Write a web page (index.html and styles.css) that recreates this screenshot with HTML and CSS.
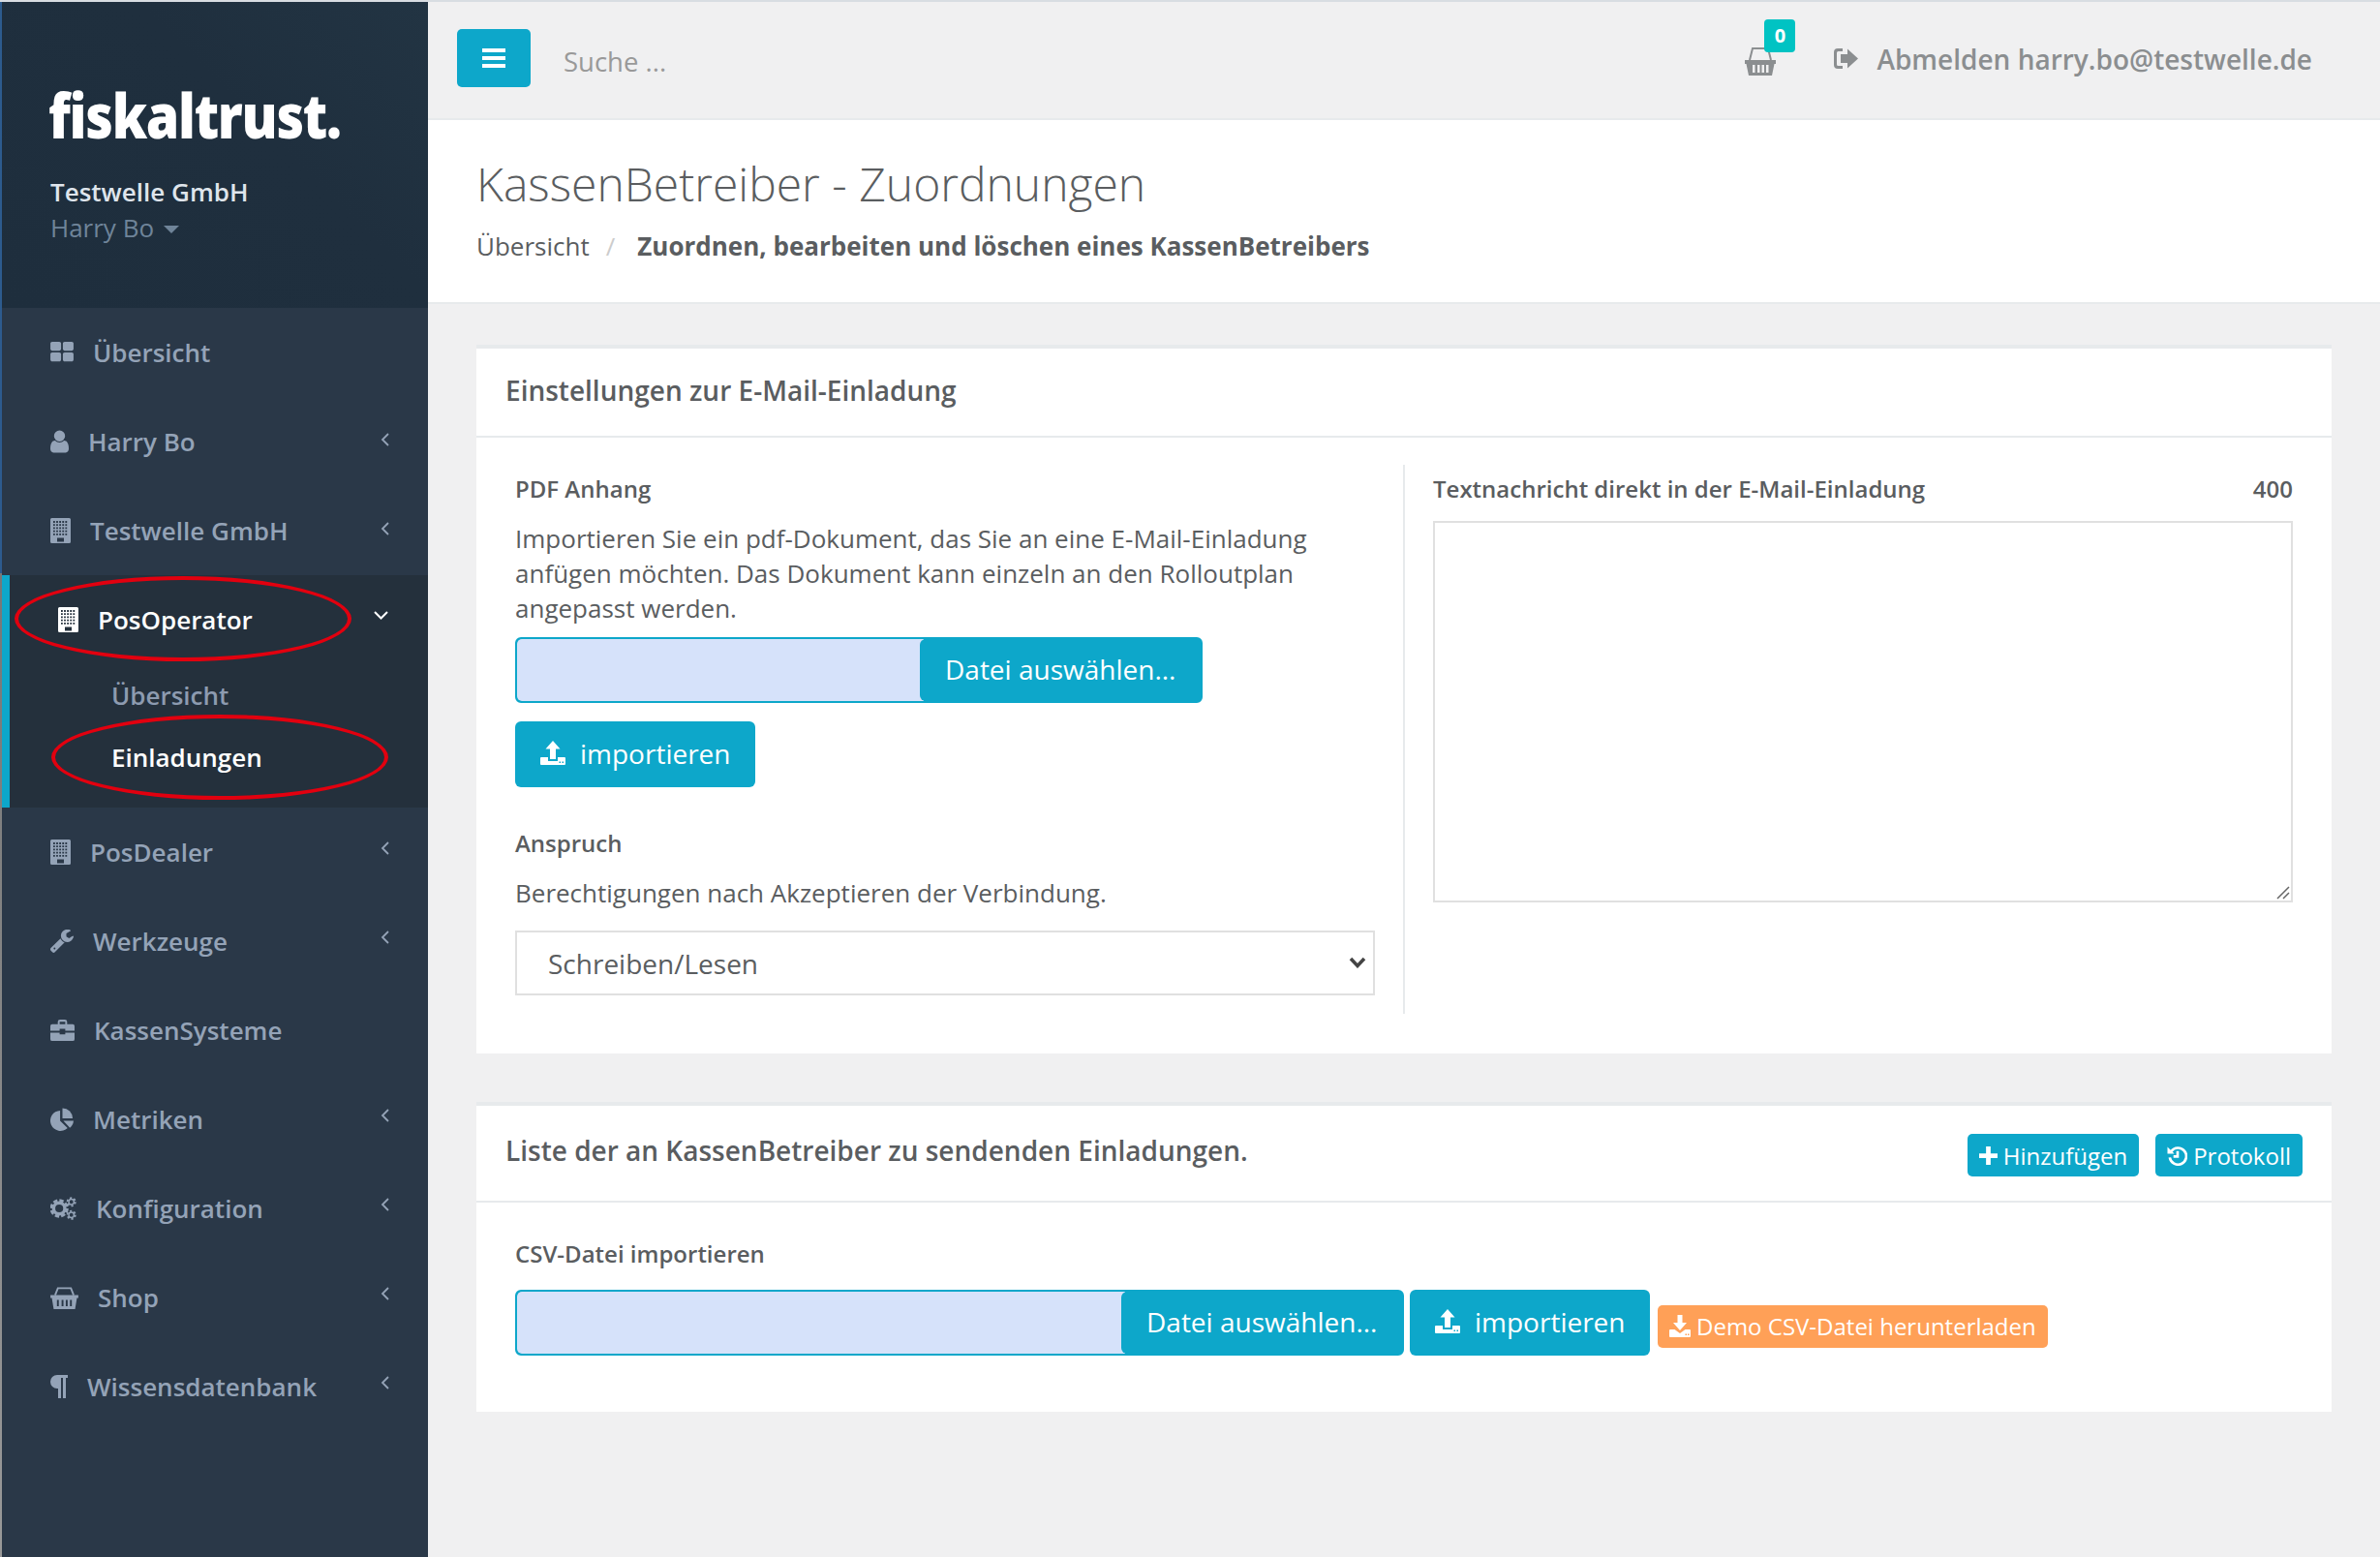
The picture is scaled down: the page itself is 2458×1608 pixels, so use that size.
FILE: index.html
```html
<!DOCTYPE html>
<html lang="de">
<head>
  <meta charset="utf-8">
  <title>KassenBetreiber - Zuordnungen</title>
  <link rel="stylesheet" href="styles.css">
</head>
<body>

<!-- icons used more than once -->
<svg class="defs" width="0" height="0">
  <symbol id="i-building" viewBox="0 0 21 26">
    <path d="M1.500 0H19.500A1.500 1.500 0 0 1 21 1.500V24.500A1.500 1.500 0 0 1 19.500 26H1.500A1.500 1.500 0 0 1 0 24.500V1.500A1.500 1.500 0 0 1 1.500 0Z"/>
    <path class="cut" d="M3 4H18.500M3 7.200H18.500M3 10.400H18.500M3 13.600H18.500M3 16.800H18.500" stroke-width="1.800" stroke-dasharray="1.800 1.300"/>
    <rect class="hole" x="7" y="20.500" width="7" height="4"/>
  </symbol>
  <symbol id="i-upload" viewBox="0 0 26 25">
    <path d="M13 0L20.500 8.500H16V19H10V8.500H5.500Z"/>
    <path fill-rule="evenodd" d="M1 17H8V21H18V17H25A1 1 0 0 1 26 18V24A1 1 0 0 1 25 25H1A1 1 0 0 1 0 24V18A1 1 0 0 1 1 17ZM19.500 21.500V23H21V21.500ZM22.500 21.500V23H24V21.500Z"/>
  </symbol>
</svg>

<div class="app">
  <div class="edge"></div>

  <aside class="sidebar">
    <div class="side-head">
      <div class="logo">fiskaltrust.</div>
      <div class="side-company">Testwelle GmbH</div>
      <div class="side-user">Harry Bo <span class="caret"></span></div>
    </div>

    <nav class="nav">
      <a class="nav-item">
        <svg class="icon w24" viewBox="60 128 1672 1536"><path d="M832 1024v384q0 52-38 90t-90 38h-512q-52 0-90-38t-38-90v-384q0-52 38-90t90-38h512q52 0 90 38t38 90zm0-768v384q0 52-38 90t-90 38h-512q-52 0-90-38t-38-90v-384q0-52 38-90t90-38h512q52 0 90 38t38 90zm896 768v384q0 52-38 90t-90 38h-512q-52 0-90-38t-38-90v-384q0-52 38-90t90-38h512q52 0 90 38t38 90zm0-768v384q0 52-38 90t-90 38h-512q-52 0-90-38t-38-90v-384q0-52 38-90t90-38h512q52 0 90 38t38 90z"/></svg>
        <span>Übersicht</span>
      </a>
      <a class="nav-item">
        <svg class="icon w19" viewBox="256 128 1280 1536"><path d="M1536 1399q0 109-62.500 187t-150.500 78h-854q-88 0-150.500-78t-62.500-187q0-85 8.500-160.500t31.500-152 58.500-131 94-89 134.500-34.500q131 128 313 128t313-128q76 0 134.500 34.500t94 89 58.500 131 31.500 152 8.500 160.500zm-256-887q0 159-112.500 271.500t-271.500 112.500-271.500-112.500-112.500-271.500 112.500-271.500 271.500-112.500 271.500 112.500 112.500 271.500z"/></svg>
        <span>Harry Bo</span>
        <svg class="chev" viewBox="0 0 9 14"><path d="M8 1L2 7L8 13"/></svg>
      </a>
      <a class="nav-item">
        <svg class="icon w21"><use href="#i-building"/></svg>
        <span>Testwelle GmbH</span>
        <svg class="chev" viewBox="0 0 9 14"><path d="M8 1L2 7L8 13"/></svg>
      </a>

      <div class="nav-open">
        <span class="mark mark-a"></span>
        <span class="mark mark-b"></span>
        <a class="nav-item nav-current">
          <svg class="icon w21"><use href="#i-building"/></svg>
          <span>PosOperator</span>
          <svg class="chev-down" viewBox="0 0 15 9"><path d="M1 1L7.500 7.500L14 1"/></svg>
        </a>
        <a class="nav-sub">Übersicht</a>
        <a class="nav-sub nav-sub-current">Einladungen</a>
      </div>

      <a class="nav-item">
        <svg class="icon w21"><use href="#i-building"/></svg>
        <span>PosDealer</span>
        <svg class="chev" viewBox="0 0 9 14"><path d="M8 1L2 7L8 13"/></svg>
      </a>
      <a class="nav-item">
        <svg class="icon w24" viewBox="64 100 1640 1590"><path d="M424 1408q0-26-19-45t-45-19-45 19-19 45 19 45 45 19 45-19 19-45zm644-420l-682 682q-37 37-90 37-52 0-91-37l-106-108q-38-36-38-90 0-53 38-91l681-681q39 98 114.500 173.500t173.500 114.500zm634-435q0 39-23 106-47 134-164.500 217.500t-258.500 83.500q-185 0-316.500-131.500t-131.500-316.500 131.500-316.500 316.500-131.500q58 0 121.500 16.500t107.500 46.500q16 11 16 28t-16 28l-293 169v224l193 107q5-3 79-48.500t135.500-81 70.500-35.500q15 0 23.500 10t8.500 25z"/></svg>
        <span>Werkzeuge</span>
        <svg class="chev" viewBox="0 0 9 14"><path d="M8 1L2 7L8 13"/></svg>
      </a>
      <a class="nav-item">
        <svg class="icon w26" viewBox="0 0 26 23"><path d="M8 5V2.500A2.500 2.500 0 0 1 10.500 0H15.500A2.500 2.500 0 0 1 18 2.500V5H24A2 2 0 0 1 26 7V12H16V10H10V12H0V7A2 2 0 0 1 2 5ZM10 5H16V2.500H10ZM0 14H10V16H16V14H26V21A2 2 0 0 1 24 23H2A2 2 0 0 1 0 21Z"/></svg>
        <span>KassenSysteme</span>
      </a>
      <a class="nav-item">
        <svg class="icon w25" viewBox="0 0 25 24"><path d="M10.500 2.500V13.500L18.500 21.500A11 11 0 1 1 10.500 2.500Z"/><path d="M13 0A11 11 0 0 1 24 11H13Z"/><path d="M14 13.500H25A11 11 0 0 1 21 21Z"/></svg>
        <span>Metriken</span>
        <svg class="chev" viewBox="0 0 9 14"><path d="M8 1L2 7L8 13"/></svg>
      </a>
      <a class="nav-item">
        <svg class="icon w28" viewBox="0 0 28 24">
          <circle class="gear" cx="9.500" cy="12" r="6"/>
          <circle class="teeth" cx="9.500" cy="12" r="8.500"/>
          <circle class="gear gear-small" cx="22.500" cy="5" r="2.800"/>
          <circle class="teeth teeth-small" cx="22.500" cy="5" r="4.300"/>
          <circle class="gear gear-small" cx="22.500" cy="19" r="2.800"/>
          <circle class="teeth teeth-small" cx="22.500" cy="19" r="4.300"/>
        </svg>
        <span>Konfiguration</span>
        <svg class="chev" viewBox="0 0 9 14"><path d="M8 1L2 7L8 13"/></svg>
      </a>
      <a class="nav-item">
        <svg class="icon w30" viewBox="0 0 30 25"><path d="M0 10H30V13H28.500L26.500 25H3.500L1.500 13H0ZM7 15V22H9V15ZM12 15V22H14V15ZM16.500 15V22H18.500V15ZM21 15V22H23V15Z" fill-rule="evenodd"/><path class="handle" d="M5 10L8 2.500H22L25 10"/></svg>
        <span>Shop</span>
        <svg class="chev" viewBox="0 0 9 14"><path d="M8 1L2 7L8 13"/></svg>
      </a>
      <a class="nav-item">
        <svg class="icon w18" viewBox="0 0 18 24"><path d="M7 0H18V3H16V24H13V3H11V24H8V14H7A7 7 0 0 1 7 0Z"/></svg>
        <span>Wissensdatenbank</span>
        <svg class="chev" viewBox="0 0 9 14"><path d="M8 1L2 7L8 13"/></svg>
      </a>
    </nav>
  </aside>

  <div class="main">
    <header class="topbar">
      <button class="menu-btn">
        <svg viewBox="0 0 24 20" width="24" height="20"><path d="M0 0H24V4H0ZM0 8H24V12H0ZM0 16H24V20H0Z"/></svg>
      </button>
      <span class="search">Suche ...</span>
      <div class="top-right">
        <div class="cart">
          <svg class="cart-icon" viewBox="0 0 32 30"><path d="M0 14H32V18H30.500L28 30H4L1.500 18H0ZM8 19V27H10.500V19ZM13 19V27H15.500V19ZM17.500 19V27H20V19ZM22 19V27H24.500V19Z" fill-rule="evenodd"/><path class="cart-handle" d="M5 14L8 2H24L27 14"/></svg>
          <span class="cart-badge">0</span>
        </div>
        <svg class="logout-icon" viewBox="0 0 25 21"><path d="M9 0H4A4 4 0 0 0 0 4V17A4 4 0 0 0 4 21H9V18H4.500A1.500 1.500 0 0 1 3 16.500V4.500A1.500 1.500 0 0 1 4.500 3H9Z"/><path d="M7 6H14V0.500L25 10.500L14 20.500V15H7Z"/></svg>
        <span class="logout">Abmelden harry.bo@testwelle.de</span>
      </div>
    </header>

    <section class="page-head">
      <h1>KassenBetreiber - Zuordnungen</h1>
      <div class="crumbs">
        <span>Übersicht</span>
        <span class="crumb-sep">/</span>
        <strong>Zuordnen, bearbeiten und löschen eines KassenBetreibers</strong>
      </div>
    </section>

    <div class="content">
      <section class="card">
        <div class="card-head"><h2>Einstellungen zur E-Mail-Einladung</h2></div>
        <div class="card-body settings">
          <div class="col col-left">
            <label class="label">PDF Anhang</label>
            <p class="text">Importieren Sie ein pdf-Dokument, das Sie an eine E-Mail-Einladung anfügen möchten. Das Dokument kann einzeln an den Rolloutplan angepasst werden.</p>
            <div class="file file-short">
              <span class="file-name"></span>
              <span class="file-btn">Datei auswählen...</span>
            </div>
            <button class="btn-import import-gap">
              <svg class="up-icon"><use href="#i-upload"/></svg>
              importieren
            </button>
            <label class="label claim">Anspruch</label>
            <p class="text claim-text">Berechtigungen nach Akzeptieren der Verbindung.</p>
            <div class="select-wrap">
              <select class="select"><option>Schreiben/Lesen</option></select>
              <svg class="select-arrow" viewBox="0 0 18 12"><path d="M2 2L9 9.500L16 2"/></svg>
            </div>
          </div>
          <div class="col col-right">
            <div class="label-row">
              <label class="label">Textnachricht direkt in der E-Mail-Einladung</label>
              <span class="label">400</span>
            </div>
            <div class="message-wrap">
              <textarea class="message"></textarea>
              <svg class="grip" viewBox="0 0 14 14"><path d="M1 13L13 1M7 13L13 7"/></svg>
            </div>
          </div>
        </div>
      </section>

      <section class="card">
        <div class="card-head card-head-tall">
          <h2>Liste der an KassenBetreiber zu sendenden Einladungen.</h2>
          <div class="head-btns">
            <button class="btn-small">
              <svg viewBox="0 0 20 20" width="19" height="19"><path d="M7.500 0H12.500V7.500H20V12.500H12.500V20H7.500V12.500H0V7.500H7.500Z"/></svg>
              Hinzufügen
            </button>
            <button class="btn-small">
              <svg class="history" viewBox="0 0 22 22" width="21" height="21"><path d="M4.500 6.500A9 9 0 1 1 3 13"/><path d="M11.500 6V12H7"/><path class="arrow" d="M0.500 1.500L8 9H0.500Z"/></svg>
              Protokoll
            </button>
          </div>
        </div>
        <div class="card-body csv">
          <label class="label">CSV-Datei importieren</label>
          <div class="csv-row">
            <div class="file file-long">
              <span class="file-name"></span>
              <span class="file-btn">Datei auswählen...</span>
            </div>
            <button class="btn-import">
              <svg class="up-icon"><use href="#i-upload"/></svg>
              importieren
            </button>
            <button class="btn-demo">
              <svg viewBox="0 0 22 23" width="22" height="23"><path d="M8.500 0H13.500V8H18L11 16L4 8H8.500Z"/><path fill-rule="evenodd" d="M1 15H5.500L11 19L16.500 15H21A1 1 0 0 1 22 16V22A1 1 0 0 1 21 23H1A1 1 0 0 1 0 22V16A1 1 0 0 1 1 15ZM16.500 19.500V21H18V19.500ZM19 19.500V21H20.500V19.500Z"/></svg>
              Demo CSV-Datei herunterladen
            </button>
          </div>
        </div>
      </section>
    </div>
  </div>
</div>

</body>
</html>
```

FILE: styles.css
```css
* {
  box-sizing: border-box;
}

html, body {
  margin: 0;
  padding: 0;
}

body {
  font-family: "Open Sans", "Noto Sans", sans-serif;
  font-size: 26px;
  color: #5a5d60;
  background: #f0f0f1;
}

.defs {
  position: absolute;
}

.app {
  display: flex;
  min-height: 1608px;
  border-top: 2px solid #d8dde2;
}

.edge {
  width: 2px;
  flex: none;
  background: linear-gradient(#2d5b8e 0, #2d5b8e 590px, #777 590px, #999 100%);
}

/* sidebar */
.sidebar {
  width: 440px;
  flex: none;
  background: #2a3848;
  color: #94a3b7;
}

.side-head {
  height: 316px;
  padding: 77px 0 0 50px;
  background: linear-gradient(45deg, #1e2e3d 0, #1f2f3e 60%, #223443 100%);
}

.logo {
  margin-left: -2px;
  font-weight: 800;
  font-size: 63px;
  line-height: 80px;
  letter-spacing: -1.500px;
  color: #fff;
  transform: scaleX(.88);
  transform-origin: left;
}

.side-company {
  margin-top: 21px;
  line-height: 36px;
  font-weight: 600;
  color: #dfe5ec;
}

.side-user {
  display: flex;
  align-items: center;
  gap: 10px;
  line-height: 38px;
  color: #6f8499;
}

.caret {
  margin-top: 4px;
  border-top: 8px solid #6f8499;
  border-left: 8px solid transparent;
  border-right: 8px solid transparent;
}

.nav {
  --bg: #2a3848;
}

.nav-item {
  display: flex;
  align-items: center;
  gap: 20px;
  height: 92px;
  padding: 0 40px 0 50px;
  font-weight: 600;
}

.icon {
  flex: none;
  height: 24px;
  fill: #94a3b7;
}

.w18 { width: 18px; }
.w19 { width: 19px; }
.w21 { width: 21px; height: 26px; }
.w24 { width: 24px; }
.w25 { width: 24px; }
.w26 { width: 25px; }
.w28 { width: 27px; }
.w30 { width: 29px; }

.cut {
  fill: none;
  stroke: var(--bg);
}

.hole {
  fill: var(--bg);
}

.gear {
  fill: none;
  stroke: #94a3b7;
  stroke-width: 3.500;
}

.teeth {
  fill: none;
  stroke: #94a3b7;
  stroke-width: 3;
  stroke-dasharray: 4.500 2.170;
}

.gear-small {
  stroke-width: 1.500;
}

.teeth-small {
  stroke-width: 1.800;
  stroke-dasharray: 2.300 2.200;
}

.handle {
  fill: none;
  stroke: #94a3b7;
  stroke-width: 2;
}

.chev {
  margin-left: auto;
  margin-top: -5px;
  width: 9px;
  height: 14px;
  flex: none;
  fill: none;
  stroke: #94a3b7;
  stroke-width: 1.800;
}

.nav-open ~ .nav-item .chev {
  margin-top: -8px;
}

.chev-down {
  margin-left: auto;
  margin-top: -9px;
  width: 15px;
  height: 9px;
  flex: none;
  fill: none;
  stroke: #fff;
  stroke-width: 2;
}

.nav-open {
  --bg: #24303c;
  position: relative;
  height: 240px;
  background: #24303c;
  border-left: 8px solid #0da7ca;
}

.nav-open .nav-item {
  padding-right: 41px;
}

.nav-current {
  color: #fff;
}

.nav-current .icon {
  fill: #fff;
}

.nav-sub {
  display: block;
  height: 64px;
  line-height: 64px;
  padding-left: 105px;
  font-weight: 600;
  color: #8d9bb0;
}

.nav-sub-current {
  color: #fff;
}

/* red rings drawn over the menu */
.mark {
  position: absolute;
  width: 348px;
  height: 88px;
  border: 4px solid #e2000f;
  border-radius: 50%;
}

.mark-a {
  left: 5px;
  top: 1px;
}

.mark-b {
  left: 43px;
  top: 144px;
}

/* top bar */
.main {
  flex: 1;
  min-width: 0;
}

.topbar {
  display: flex;
  align-items: center;
  height: 122px;
  padding: 0 70px 4px 30px;
  background: #f0f0f1;
  border-bottom: 2px solid #e7eaec;
}

.menu-btn {
  display: flex;
  align-items: center;
  justify-content: center;
  width: 76px;
  height: 60px;
  padding: 0;
  background: #0da7ca;
  border: 0;
  border-radius: 5px;
}

.menu-btn svg {
  fill: #fff;
}

.search {
  margin-left: 34px;
  margin-top: 6px;
  color: #999;
  font-size: 27.500px;
}

.top-right {
  display: flex;
  align-items: center;
  margin-left: auto;
}

.cart {
  position: relative;
  width: 32px;
  height: 30px;
  margin-top: 6px;
}

.cart-icon {
  display: block;
  width: 32px;
  height: 30px;
  fill: #8b8e90;
}

.cart-handle {
  fill: none;
  stroke: #8b8e90;
  stroke-width: 2;
}

.cart-badge {
  position: absolute;
  left: 20px;
  top: -28px;
  width: 32px;
  height: 34px;
  border-radius: 4px;
  background: #00c3c3;
  color: #fff;
  font-size: 20px;
  font-weight: 700;
  line-height: 34px;
  text-align: center;
}

.logout-icon {
  width: 25px;
  height: 21px;
  margin-left: 60px;
  fill: #8b8e90;
}

.logout {
  margin-left: 19px;
  margin-top: 2px;
  font-size: 28px;
  font-weight: 600;
  color: #8b8e90;
}

/* page heading */
.page-head {
  height: 190px;
  padding: 30px 0 0 50px;
  background: #fff;
  border-bottom: 2px solid #e7eaec;
}

.page-head h1 {
  margin: 0;
  font-size: 48px;
  font-weight: 300;
  line-height: 72px;
  color: #5a5d60;
}

.crumbs {
  display: flex;
  align-items: center;
  margin-top: 8px;
  line-height: 40px;
  font-size: 26px;
}

.crumb-sep {
  margin: 0 23px 0 17px;
  color: #ccc;
}

/* cards */
.content {
  padding: 42px 50px 0;
}

.card {
  margin-bottom: 50px;
  background: #fff;
  border-top: 4px solid #e7eaec;
}

.card-head {
  display: flex;
  align-items: center;
  justify-content: space-between;
  height: 92px;
  padding: 0 30px 5px;
  border-bottom: 2px solid #e7eaec;
}

.card-head-tall {
  height: 100px;
}

.card-head h2 {
  margin: 0;
  font-size: 28px;
  font-weight: 600;
  color: #5a5d60;
}

.card-head-tall h2 {
  margin-top: -2px;
}

.head-btns {
  display: flex;
  gap: 17px;
  margin-top: 9px;
}

.settings {
  display: grid;
  grid-template-columns: 917px 1fr;
  padding: 28px 40px 41px;
}

.col {
  padding-top: 7px;
}

.col-left {
  padding-right: 29px;
  padding-bottom: 19px;
}

.col-right {
  padding-left: 29px;
  border-left: 2px solid #e7eaec;
}

.label {
  display: block;
  line-height: 36px;
  font-size: 24px;
  font-weight: 600;
}

.text {
  margin: 15px 0 0;
  line-height: 36px;
  font-size: 26px;
}

.label-row {
  display: flex;
  justify-content: space-between;
}

.message-wrap {
  position: relative;
  margin-top: 15px;
}

.message {
  display: block;
  width: 100%;
  height: 394px;
  border: 2px solid #e0e0e0;
  background: #fff;
  resize: none;
}

.grip {
  position: absolute;
  right: 3px;
  bottom: 3px;
  width: 14px;
  height: 14px;
  fill: none;
  stroke: #666;
  stroke-width: 1.500;
}

.file {
  display: flex;
  height: 68px;
  border: 2px solid #0da7ca;
  border-radius: 6px;
  background: #0da7ca;
  overflow: hidden;
}

.file-short {
  width: 710px;
  margin-top: 12px;
}

.file-long {
  width: 918px;
}

.file-name {
  flex: 1;
  background: #d6e2fa;
  border-radius: 5px 0 0 5px;
}

.file-btn {
  width: 290px;
  flex: none;
  margin-left: -4px;
  padding-left: 26px;
  line-height: 62px;
  border-radius: 6px 0 0 6px;
  background: #0da7ca;
  color: #fff;
  font-size: 28px;
}

.btn-import {
  display: flex;
  align-items: center;
  gap: 15px;
  width: 248px;
  height: 68px;
  padding: 0 0 3px 26px;
  background: #0da7ca;
  border: 0;
  border-radius: 6px;
  color: #fff;
  font-family: inherit;
  font-size: 28px;
}

.import-gap {
  margin-top: 19px;
}

.up-icon {
  width: 26px;
  height: 25px;
  fill: #fff;
  flex: none;
}

.claim {
  margin-top: 40px;
}

.select-wrap {
  position: relative;
  margin-top: 21px;
}

.select {
  display: block;
  width: 100%;
  height: 67px;
  padding-left: 32px;
  appearance: none;
  background: #fff;
  border: 2px solid #e0e0e0;
  border-radius: 0;
  font-family: inherit;
  font-size: 28px;
  color: #5a5d60;
}

.select-arrow {
  position: absolute;
  right: 9px;
  top: 27px;
  width: 18px;
  height: 12px;
  fill: none;
  stroke: #444;
  stroke-width: 3.500;
}

.btn-small {
  display: flex;
  align-items: center;
  gap: 6px;
  height: 44px;
  padding: 0 12px;
  background: #0da7ca;
  border: 0;
  border-radius: 5px;
  color: #fff;
  font-family: inherit;
  font-size: 24px;
  fill: #fff;
}

.history {
  fill: none;
  stroke: #fff;
  stroke-width: 2.800;
}

.history .arrow {
  fill: #fff;
  stroke: none;
}

.csv {
  padding: 35px 40px 58px;
}

.csv-row {
  display: flex;
  align-items: flex-start;
  gap: 6px;
  margin-top: 19px;
}

.btn-demo {
  display: flex;
  align-items: center;
  gap: 6px;
  height: 44px;
  margin: 16px 0 0 2px;
  padding: 0 12px 2px;
  background: #ffa057;
  border: 0;
  border-radius: 5px;
  color: #fff;
  font-family: inherit;
  font-size: 24px;
  fill: #fff;
}
```
